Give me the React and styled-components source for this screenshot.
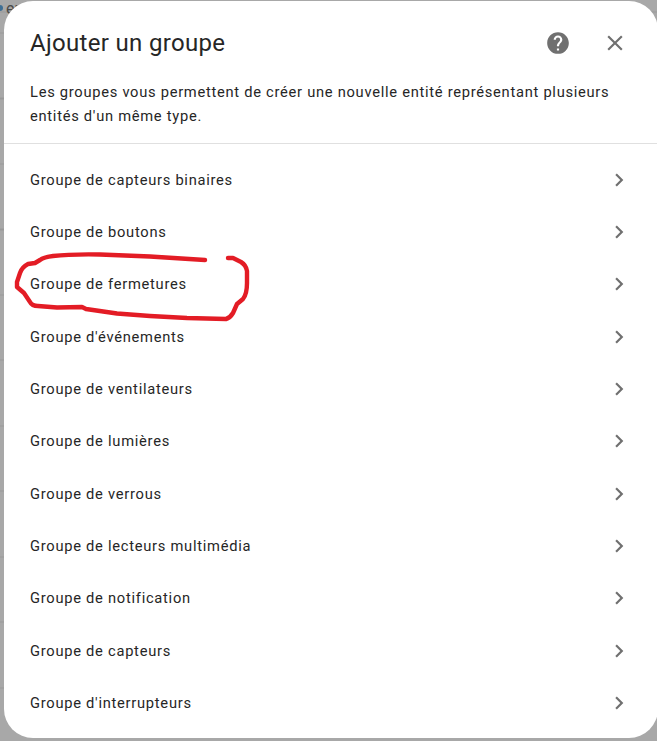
import React from "react";
import styled, { createGlobalStyle } from "styled-components";

const GROUPS = [
  "Groupe de capteurs binaires",
  "Groupe de boutons",
  "Groupe de fermetures",
  "Groupe d'événements",
  "Groupe de ventilateurs",
  "Groupe de lumières",
  "Groupe de verrous",
  "Groupe de lecteurs multimédia",
  "Groupe de notification",
  "Groupe de capteurs",
  "Groupe d'interrupteurs",
];

const GlobalStyle = createGlobalStyle`
  html, body {
    margin: 0;
    padding: 0;
    height: 741px;
    overflow: hidden;
    background: #a8a8a8;
  }
`;

// page behind the dialog: dimmed list with a separator every 65.5px
const Page = styled.div`
  position: relative;
  width: 657px;
  height: 741px;
  overflow: hidden;
  box-sizing: border-box;
  padding: 1px 0 3px 4px;
  font-family: Roboto, "Liberation Sans", sans-serif;
  background-color: #a8a8a8;
  background-image: repeating-linear-gradient(
    to bottom,
    #999 0,
    #999 1px,
    transparent 1px,
    transparent 65.5px
  );
  background-position: 0 32.5px;
`;

const BehindDot = styled.span`
  position: absolute;
  left: -3px;
  top: 5px;
  width: 6px;
  height: 6px;
  border-radius: 50%;
  background: #3f6f94;
`;

const BehindText = styled.span`
  position: absolute;
  left: 6px;
  top: -1px;
  font-size: 16px;
  color: #4a4a4a;
`;

const Dialog = styled.div`
  position: relative;
  width: 654px;
  height: 737px;
  background: #fff;
  border-radius: 29px;
  overflow: hidden;
  color: #262626;
`;

const Header = styled.div`
  display: flex;
  align-items: center;
  justify-content: space-between;
  padding: 20px 30px 0 26px;
  height: 44px;
`;

const Title = styled.h2`
  margin: 0;
  font-size: 24px;
  font-weight: 400;
  letter-spacing: 0.32px;
`;

const Actions = styled.div`
  display: flex;
  align-items: center;
  gap: 31px;
`;

const IconButton = styled.div`
  display: flex;
  color: #707070;
`;

const Description = styled.p`
  margin: 0;
  padding: 15px 26px 0;
  height: 63px;
  font-size: 14.7px;
  line-height: 24px;
  letter-spacing: 0.72px;
  border-bottom: 1px solid #e0e0e0;
`;

const List = styled.div`
  display: flex;
  flex-direction: column;
  padding-top: 9.4px;
`;

const Row = styled.div`
  display: flex;
  align-items: center;
  justify-content: space-between;
  height: 52.35px;
  padding: 0 26px;
  font-size: 14.7px;
  letter-spacing: 0.73px;
`;

const Chevron = styled.svg`
  width: 26px;
  height: 26px;
  margin-right: 0;
  fill: #707070;
`;

const Scribble = styled.svg`
  position: absolute;
  left: 0;
  top: 240px;
  width: 270px;
  height: 90px;
  pointer-events: none;
`;

export default function App() {
  return (
    <Page>
      <GlobalStyle />
      <BehindDot />
      <BehindText>en</BehindText>
      <Dialog>
        <Header>
          <Title>Ajouter un groupe</Title>
          <Actions>
            <IconButton>
              <svg width="26" height="26" viewBox="0 0 24 24" fill="currentColor">
                <path d="M15.07 11.25l-.9.92C13.45 12.89 13 13.5 13 15h-2v-.5c0-1.11.45-2.11 1.17-2.83l1.24-1.26c.37-.36.59-.86.59-1.41a2 2 0 0 0-2-2 2 2 0 0 0-2 2H8a4 4 0 0 1 4-4 4 4 0 0 1 4 4c0 .88-.36 1.67-.93 2.25M13 19h-2v-2h2M12 2A10 10 0 0 0 2 12a10 10 0 0 0 10 10 10 10 0 0 0 10-10c0-5.53-4.5-10-10-10z" />
              </svg>
            </IconButton>
            <IconButton>
              <svg width="26" height="26" viewBox="0 0 24 24" fill="currentColor">
                <path d="M19 6.41L17.59 5 12 10.59 6.41 5 5 6.41 10.59 12 5 17.59 6.41 19 12 13.41 17.59 19 19 17.59 13.41 12z" />
              </svg>
            </IconButton>
          </Actions>
        </Header>
        <Description>
          Les groupes vous permettent de créer une nouvelle entité représentant plusieurs entités d'un même type.
        </Description>
        <List>
          {GROUPS.map((name) => (
            <Row key={name}>
              {name}
              <Chevron viewBox="0 0 24 24">
                <path d="M8.59 16.58L13.17 12 8.59 7.41 10 6l6 6-6 6z" />
              </Chevron>
            </Row>
          ))}
        </List>
      </Dialog>
      <Scribble viewBox="0 0 270 90">
        <path
          d="M205 20 L150 16.5 L100 14.5 Q70 14 53 16 Q44 17 40 20 L35 23 L28 24 Q22 27 20 33 L17 42 L17 47 L24 53 L30 62 Q32 66 38 66 L57 67.5 L82 67 L86 69 L117 73.5 L150 76 L187 78 L226 79 Q230 78 233 73 L237 64 L243 59 Q247 54 247 43 L247 31 Q246 25 241 22 L233 18 L228 18"
          fill="none"
          stroke="#e31c25"
          strokeWidth="4.4"
          strokeLinecap="round"
          strokeLinejoin="round"
        />
      </Scribble>
    </Page>
  );
}
